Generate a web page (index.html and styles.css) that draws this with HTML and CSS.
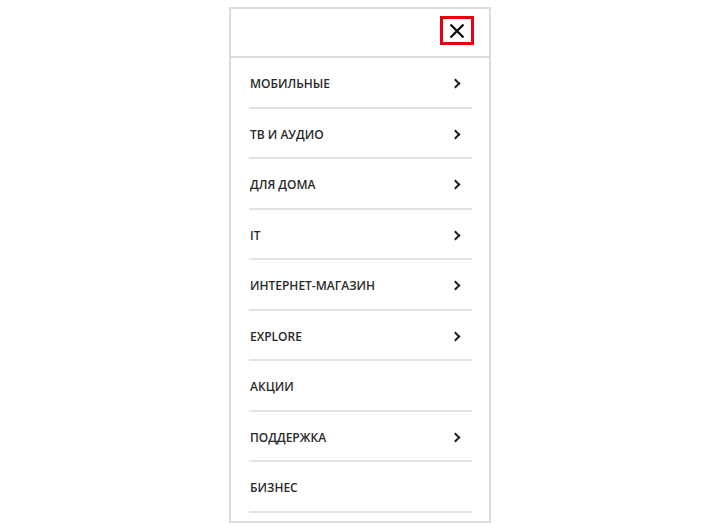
FILE: index.html
```html
<!DOCTYPE html>
<html lang="ru">
<head>
    <meta charset="UTF-8">
    <meta name="viewport" content="width=device-width, initial-scale=1.0">
    <title>Меню</title>
    <link rel="stylesheet" href="styles.css">
</head>
<body>
    <div class="menu">
        <div class="menu-header">
            <button class="close">
                <svg width="16" height="16" viewBox="0 0 16 16"><path d="M1.5 1.5 L14.5 14.5 M14.5 1.5 L1.5 14.5" stroke="#111" stroke-width="2.4" fill="none"/></svg>
            </button>
        </div>
        <ul class="menu-list">
            <li><span>МОБИЛЬНЫЕ</span><i class="arrow"></i></li>
            <li><span>ТВ И АУДИО</span><i class="arrow"></i></li>
            <li><span>ДЛЯ ДОМА</span><i class="arrow"></i></li>
            <li><span>IT</span><i class="arrow"></i></li>
            <li><span>ИНТЕРНЕТ-МАГАЗИН</span><i class="arrow"></i></li>
            <li><span>EXPLORE</span><i class="arrow"></i></li>
            <li><span>АКЦИИ</span></li>
            <li><span>ПОДДЕРЖКА</span><i class="arrow"></i></li>
            <li><span>БИЗНЕС</span></li>
        </ul>
    </div>
</body>
</html>
```

FILE: styles.css
```css
body {
    margin: 0;
    background: #fff;
    font-family: "Open Sans", Arial, sans-serif;
}
.menu {
    width: 258px;
    margin: 7px 0 0 229px;
    border: 2px solid #dcdcdc;
    padding-bottom: 8px;
}
.menu-header {
    height: 47px;
    border-bottom: 2px solid #dcdcdc;
    display: flex;
    justify-content: flex-end;
    align-items: center;
    padding-right: 15px;
}
.close {
    width: 34px;
    height: 29px;
    border: 3px solid #e3000f;
    background: #fff;
    padding: 0;
    margin-top: -4px;
    display: flex;
    align-items: center;
    justify-content: center;
}
.menu-list {
    list-style: none;
    margin: 0 17px 0 18px;
    padding: 0;
}
.menu-list li {
    height: 45.5px;
    border-bottom: 2px solid #e2e2e2;
    display: flex;
    align-items: center;
    justify-content: space-between;
    padding: 3px 0 0 1px;
    font-size: 12px;
    font-weight: 600;
    color: #2a2a2a;
}
.arrow {
    width: 5px;
    height: 5px;
    border-top: 2px solid #222;
    border-right: 2px solid #222;
    transform: rotate(45deg);
    margin-right: 13px;
}
```
